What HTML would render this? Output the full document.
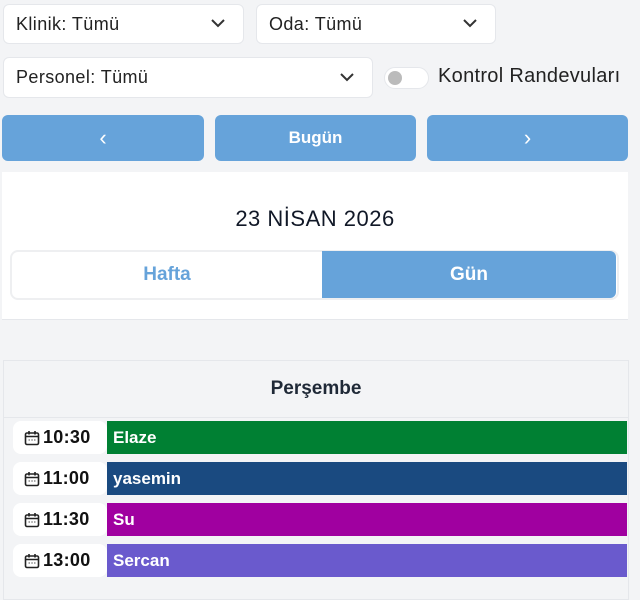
<!DOCTYPE html>
<html><head><meta charset="utf-8"><style>
*{box-sizing:border-box;margin:0;padding:0}
body{width:640px;height:580px;background:#f3f4f6;font-family:"Liberation Sans",sans-serif;position:relative;overflow:hidden;color:#1f2937}
.a{position:absolute}
.sel{background:#fff;border:1px solid #e5e7eb;border-radius:6px;font-size:18px;letter-spacing:0.4px;padding-left:12px;display:flex;align-items:center;color:#222}
.sel svg{position:absolute;right:18px;top:50%;margin-top:-5px}
.btn{background:#66a3da;border-radius:6px;color:#fff;display:flex;align-items:center;justify-content:center;font-weight:bold;font-size:17px}
.row{left:13px;width:614px;height:33px}
.pill{position:absolute;left:0;top:0;width:94px;height:33px;background:#fff;border-radius:8px;display:flex;align-items:center;padding-left:11px;font-weight:bold;font-size:18px;letter-spacing:0.3px;color:#111}
.pill svg{margin-right:3px}
.bar{position:absolute;left:94px;top:0;right:0;height:33px;color:#fff;font-weight:bold;font-size:17px;display:flex;align-items:center;padding-left:6px}
</style></head><body>
<div class="a sel" style="left:3px;top:4px;width:241px;height:40px">Klinik: Tümü<svg width="14" height="9" viewBox="0 0 14 9"><path d="M1 1l6 6 6-6" fill="none" stroke="#333" stroke-width="2"/></svg></div>
<div class="a sel" style="left:256px;top:4px;width:240px;height:40px">Oda: Tümü<svg width="14" height="9" viewBox="0 0 14 9"><path d="M1 1l6 6 6-6" fill="none" stroke="#333" stroke-width="2"/></svg></div>
<div class="a sel" style="left:3px;top:57px;width:370px;height:41px">Personel: Tümü<svg width="14" height="9" viewBox="0 0 14 9"><path d="M1 1l6 6 6-6" fill="none" stroke="#333" stroke-width="2"/></svg></div>
<div class="a" style="left:384px;top:67px;width:45px;height:22px;border-radius:11px;background:#fff;border:1px solid #e5e7eb"><div style="position:absolute;left:3px;top:3px;width:14px;height:14px;border-radius:50%;background:#bbb"></div></div>
<div class="a" style="left:438px;top:65px;font-size:20px;letter-spacing:0.3px;color:#222">Kontrol Randevuları</div>
<div class="a btn" style="left:2px;top:115px;width:202px;height:46px;font-weight:normal;font-size:22px">‹</div>
<div class="a btn" style="left:215px;top:115px;width:201px;height:46px">Bugün</div>
<div class="a btn" style="left:427px;top:115px;width:201px;height:46px;font-weight:normal;font-size:22px">›</div>
<div class="a" style="left:2px;top:172px;width:626px;height:148px;background:#fff;border-bottom:1px solid #e5e7eb"></div>
<div class="a" style="left:2px;top:206px;width:626px;text-align:center;font-size:22px;letter-spacing:0.5px;color:#111827">23 NİSAN 2026</div>
<div class="a" style="left:10px;top:250px;width:609px;height:50px;border:2px solid #eeeff1;border-radius:8px;background:#fff"></div>
<div class="a" style="left:12px;top:252px;width:310px;height:46px;display:flex;align-items:center;justify-content:center;font-weight:bold;font-size:19px;color:#66a3da">Hafta</div>
<div class="a" style="left:322px;top:251px;width:294px;height:47px;background:#66a3da;border-radius:0 6px 6px 0;display:flex;align-items:center;justify-content:center;font-weight:bold;font-size:19px;color:#fff">Gün</div>
<div class="a" style="left:3px;top:360px;width:626px;height:240px;border:1px solid #e5e7eb;background:#f3f4f6"></div>
<div class="a" style="left:3px;top:360px;width:626px;height:58px;border:1px solid #e5e7eb;display:flex;align-items:center;justify-content:center;font-weight:bold;font-size:19px;color:#1f2937">Perşembe</div>
<svg width="0" height="0" style="position:absolute"><defs><symbol id="c" viewBox="0 0 16 16"><rect x="1.5" y="3" width="13" height="11.5" rx="1.5" fill="none" stroke="#222" stroke-width="1.6"/><path d="M1.5 6.5h13M5 1v3.5M11 1v3.5" stroke="#222" stroke-width="1.6"/><path d="M4.5 10h1.5M7.3 10h1.5M10 10h1.5" stroke="#555" stroke-width="1"/></symbol></defs></svg>
<div class="a row" style="top:421px"><div class="pill"><svg width="16" height="16"><use href="#c"/></svg>10:30</div><div class="bar" style="background:#008033">Elaze</div></div>
<div class="a row" style="top:462px"><div class="pill"><svg width="16" height="16"><use href="#c"/></svg>11:00</div><div class="bar" style="background:#1a4a80">yasemin</div></div>
<div class="a row" style="top:503px"><div class="pill"><svg width="16" height="16"><use href="#c"/></svg>11:30</div><div class="bar" style="background:#a000a0">Su</div></div>
<div class="a row" style="top:544px"><div class="pill"><svg width="16" height="16"><use href="#c"/></svg>13:00</div><div class="bar" style="background:#6a5acd">Sercan</div></div>
</body></html>
